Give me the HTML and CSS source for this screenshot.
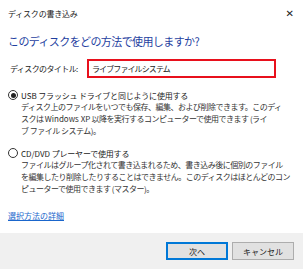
FILE: index.html
```html
<!DOCTYPE html>
<html lang="ja">
<head>
    <meta charset="UTF-8">
    <title>ディスクの書き込み</title>
    <link rel="stylesheet" href="styles.css">
</head>
<body>
    <div class="dialog">
        <div class="titlebar">
            <span class="title">ディスクの書き込み</span>
            <span class="close">✕</span>
        </div>

        <div class="content">
            <h1 class="heading">このディスクをどの方法で使用しますか?</h1>

            <div class="field">
                <label class="field-label">ディスクのタイトル:</label>
                <div class="field-input">ライブファイルシステム</div>
            </div>

            <div class="option">
                <div class="option-row">
                    <span class="radio checked"></span>
                    <span class="option-title"><span class="latin">USB</span> フラッシュ ドライブと同じように使用する</span>
                </div>
                <p class="option-desc">
                    ディスク上のファイルをいつでも保存、編集、および削除できます。このディ<br>
                    スクは <span class="latin">Windows XP</span> 以降を実行するコンピューターで使用できます (ライ<br>
                    ブ ファイル システム)。
                </p>
            </div>

            <div class="option">
                <div class="option-row">
                    <span class="radio"></span>
                    <span class="option-title"><span class="latin">CD/DVD</span> プレーヤーで使用する</span>
                </div>
                <p class="option-desc">
                    ファイルはグループ化されて書き込まれるため、書き込み後に個別のファイル<br>
                    を編集したり削除したりすることはできません。このディスクはほとんどのコン<br>
                    ピューターで使用できます (マスター)。
                </p>
            </div>

            <a class="more" href="#">選択方法の詳細</a>
        </div>

        <div class="footer">
            <button class="btn primary">次へ</button>
            <button class="btn">キャンセル</button>
        </div>
    </div>
</body>
</html>
```

FILE: styles.css
```css
html, * {
    box-sizing: border-box;
    margin: 0;
    padding: 0;
}

body {
    width: 303px;
    height: 269px;
    background: #ffffff;
    font-family: "Noto Sans CJK JP", "Noto Sans", sans-serif;
    color: #1a1a1a;
    overflow: hidden;
}

.dialog {
    display: flex;
    flex-direction: column;
    height: 269px;
}

.titlebar {
    height: 26px;
    display: flex;
    align-items: center;
    justify-content: space-between;
    padding: 0 9px 0 8px;
}

.title {
    font-size: 8px;
    letter-spacing: -0.2px;
    color: #222;
}

.close {
    font-size: 10px;
    color: #222;
    font-family: "DejaVu Sans", sans-serif;
}

.content {
    flex: 1;
    padding: 0 8px;
}

.heading {
    font-size: 11px;
    font-weight: normal;
    color: #1f3f9f;
    letter-spacing: -0.6px;
    line-height: 16px;
    margin-top: 7px;
}

.field {
    display: flex;
    align-items: center;
    margin-top: 10px;
}

.field-label {
    width: 79px;
    padding-left: 2px;
    font-size: 8px;
    letter-spacing: -0.6px;
}

.field-input {
    width: 189px;
    height: 19px;
    border: 2px solid #e8101c;
    padding: 0 3px;
    font-size: 8px;
    letter-spacing: -0.9px;
    line-height: 15px;
}

.option {
    margin-top: 11px;
}

.option + .option {
    margin-top: 10px;
}

.option-row {
    display: flex;
    align-items: center;
    height: 12px;
}

.radio {
    width: 10px;
    height: 10px;
    border: 1px solid #333;
    border-radius: 50%;
    display: flex;
    align-items: center;
    justify-content: center;
    margin-right: 3px;
}

.radio.checked::after {
    content: "";
    width: 5px;
    height: 5px;
    border-radius: 50%;
    background: #222;
}

.option-title {
    font-size: 8px;
    letter-spacing: -0.2px;
}

.option-desc {
    padding-left: 13px;
    font-size: 8px;
    letter-spacing: -0.5px;
    line-height: 12px;
    color: #333;
    white-space: nowrap;
}

.latin {
    letter-spacing: 0;
}

.more {
    display: inline-block;
    margin-top: 15px;
    font-size: 8px;
    color: #1a66cc;
    text-decoration: underline;
}

.footer {
    height: 36px;
    background: #f0f0f0;
    display: flex;
    justify-content: flex-end;
    align-items: center;
    gap: 4px;
    padding-right: 9px;
}

.btn {
    width: 62px;
    height: 18px;
    background: #e1e1e1;
    border: 1px solid #adadad;
    font-family: inherit;
    font-size: 8px;
    color: #1a1a1a;
}

.btn.primary {
    border: 1px solid #0078d7;
    box-shadow: inset 0 0 0 1px #0078d7;
}
```
